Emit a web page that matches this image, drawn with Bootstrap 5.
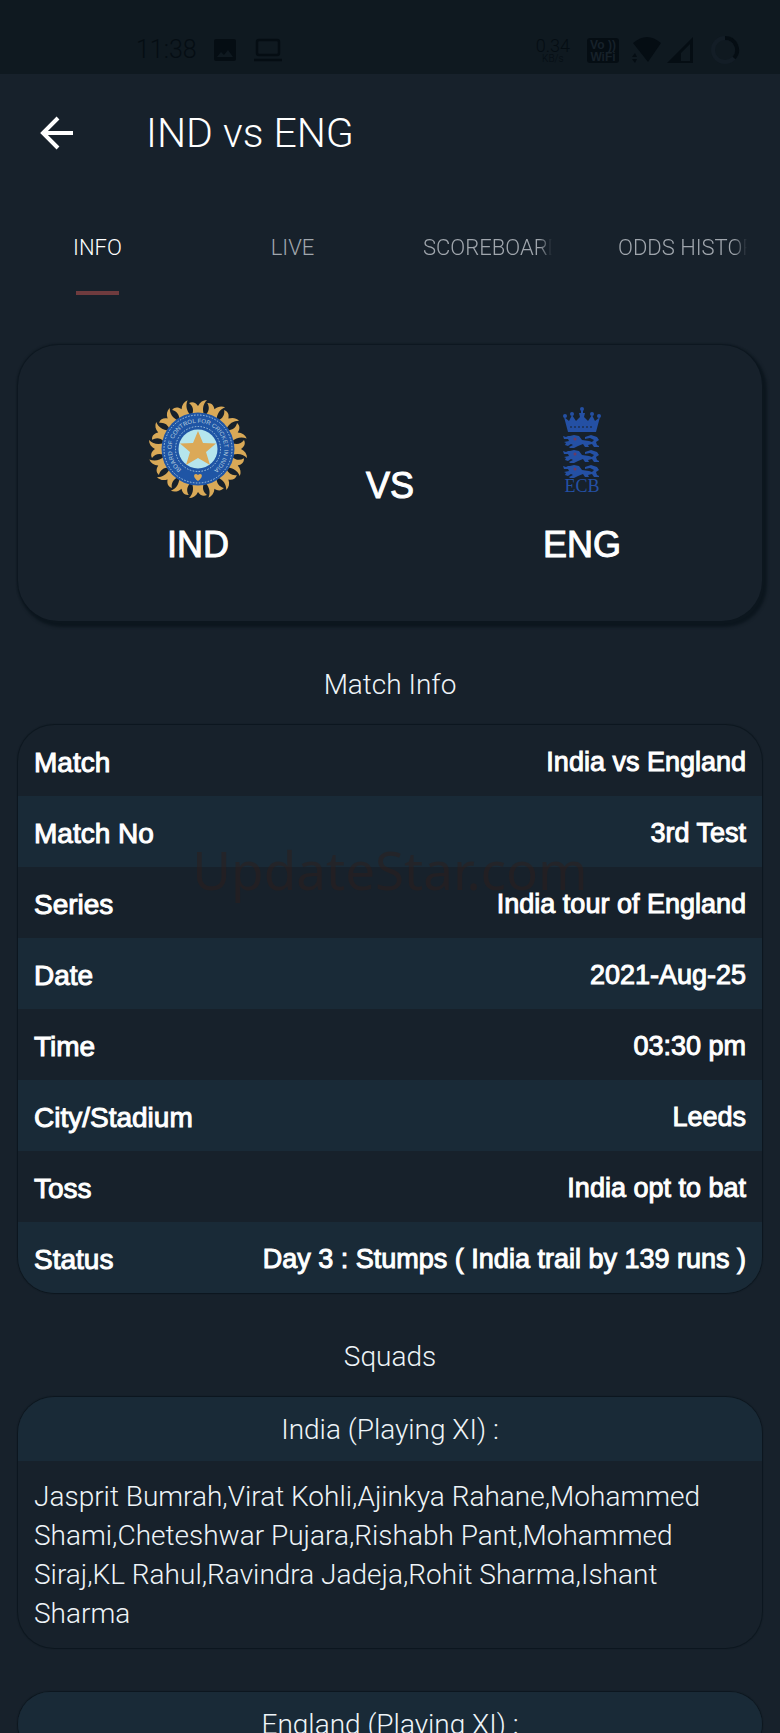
<!DOCTYPE html>
<html lang="en">
<head>
<meta charset="utf-8">
<meta name="viewport" content="width=device-width, initial-scale=1">
<title>IND vs ENG</title>
<link href="https://cdn.jsdelivr.net/npm/bootstrap@5.3.0/dist/css/bootstrap.min.css" rel="stylesheet">
<style>
  :root { --bg: #17212b; --stripe: #192a37; --edge: #0c161e; }
  body { background: var(--bg); color: #eef4f8; font-family: Roboto, "Liberation Sans", sans-serif; font-weight: 300; font-size: 28px; line-height: 39px; height: 100vh; overflow: hidden; }
  .status-bar { background: #0f1920; height: 74px; color: #050d13; padding: 26px 40px 0 136px; line-height: 48px; }
  .clock { font-size: 25px; }
  .rate { font-size: 18px; line-height: 18px; }
  .rate small { font-size: 10px; line-height: 8px; }
  .app-bar { height: 118px; padding: 0 40px; gap: 72px; }
  .app-bar h1 { font-size: 41px; line-height: 48px; font-weight: 300; color: #fff; }
  .back { width: 34px; height: 34px; line-height: 0; color: #fff; }
  .tabs { height: 110px; }
  .tabs .nav-link { color: #a0a6ad; font-size: 22px; line-height: 28px; padding: 42px 33px 0; height: 110px; overflow: hidden; }
  .tabs .nav-link.active { color: #fff; }
  .tabs .nav-link.active::after { content: ""; display: block; width: 43px; height: 4px; margin: 29px auto 0; background: #6f3b3e; }
  .fade-end { overflow: hidden; white-space: nowrap; -webkit-mask-image: linear-gradient(90deg, #000 90%, transparent); mask-image: linear-gradient(90deg, #000 90%, transparent); }
  main { padding: 43px 18px 0; }
  .versus { height: 276px; border-radius: 40px; padding: 52px 84px 0; box-shadow: 3px 4px 3px 2px var(--edge), 0 0 2px 1px var(--edge); background: var(--bg); }
  .strong-text { font-family: "Liberation Sans", sans-serif; font-weight: 400; color: #fff; -webkit-text-stroke: 1px #fff; }
  .team { font-size: 36px; line-height: 44px; }
  .team-side { gap: 22px; }
  .crest text { -webkit-text-stroke: 0; }
  .section-title { font-size: 28px; line-height: 40px; font-weight: 300; margin: 0; padding: 44px 0 20px; }
  .panel { border-radius: 36px; box-shadow: 0 0 1px 1px var(--edge); overflow: hidden; }
  .facts { --bs-table-bg: transparent; --bs-table-color: #fff; font-size: 28px; line-height: 35px; color: #fff; }
  .facts th, .facts td { height: 71px; padding: 4px 16px 0; border: 0; vertical-align: middle; font-weight: 400; }
  .facts td { font-size: 27px; }
  .facts tr:nth-child(even) > * { background: var(--stripe); }
  .squad-head { background: var(--stripe); font-size: 28px; line-height: 40px; padding: 13px 16px 11px; font-weight: 300; }
  .squad-body { padding: 16px 16px 15px; }
  .squad-next { margin-top: 44px; }
  .watermark { top: 105px; left: 0; right: 0; font-family: "Noto Sans", sans-serif; font-weight: 400; font-size: 53px; line-height: 80px; color: #2d1f1c; opacity: .5; pointer-events: none; }
</style>
</head>
<body>
<div class="status-bar d-flex align-items-start">
  <span class="clock">11:38</span>
  <div class="d-flex align-items-center gap-3 ms-3 h-100">
    <svg width="24" height="24" viewBox="0 0 24 24"><path fill="currentColor" fill-rule="evenodd" d="M3 1h18a2 2 0 0 1 2 2v18a2 2 0 0 1-2 2H3a2 2 0 0 1-2-2V3a2 2 0 0 1 2-2zM4 19h16l-5-7-4 5-3-3z"/></svg>
    <svg width="30" height="24" viewBox="0 0 30 24" fill="none" stroke="currentColor" stroke-width="2.5"><rect x="4" y="2" width="22" height="15" rx="2"/><path d="M1 22h28"/></svg>
  </div>
  <div class="d-flex align-items-center ms-auto h-100">
    <span class="rate d-flex flex-column text-center me-3">0.34 <small>KB/s</small></span>
    <svg class="me-2" width="34" height="27" viewBox="0 0 34 27"><rect x="1" y="1" width="32" height="25" rx="3" fill="currentColor"/><g fill="#17212a" font-family="Liberation Sans, sans-serif" font-weight="700" font-size="12" text-anchor="middle"><text x="17" y="12">Vo ))</text><text x="17" y="24">WiFi</text></g></svg>
    <svg class="ms-1 me-3" width="62" height="28" viewBox="0 0 62 28"><path fill="currentColor" d="M1 7Q15-5 29 7L16 26zM0 21l3-4 2 4zM0 23h5l-2 4z"/><path fill="currentColor" fill-rule="evenodd" d="M35 27L61 1v26zM49 25h9V8l-9 9z"/></svg>
    <svg width="30" height="30" viewBox="0 0 30 30" fill="none" stroke-width="4"><circle cx="15" cy="15" r="12" stroke="#131d26"/><path stroke="currentColor" d="M15 3a12 12 0 0 1 9 20"/></svg>
  </div>
</div>

<header class="app-bar d-flex align-items-center">
  <button type="button" class="back btn p-0 border-0" aria-label="Back">
    <svg width="34" height="34" viewBox="0 0 34 34" fill="none" stroke="currentColor" stroke-width="4"><path d="M33 17H4M18 2L3 17l15 15"/></svg>
  </button>
  <h1 class="m-0">IND vs ENG</h1>
</header>

<nav class="tabs nav nav-fill flex-nowrap row g-0">
  <a class="nav-link active col-3 text-center" href="#info" aria-current="page">INFO</a>
  <a class="nav-link col-3 text-center" href="#live">LIVE</a>
  <a class="nav-link col-3 text-start" href="#scoreboard"><div class="fade-end">SCOREBOARD</div></a>
  <a class="nav-link col-3 text-start" href="#odds"><div class="fade-end">ODDS HISTORY</div></a>
</nav>

<main id="info">
  <section class="versus">
    <div class="row g-0 text-center strong-text team align-items-center">
      <div class="col-4 team-side d-flex flex-column align-items-center">
        <svg class="crest" width="100" height="104" viewBox="-50 -52 100 104" role="img" aria-label="India crest">
          <defs>
            <path id="petal" d="M-6-34C-4-39-5-43-9-46C-5-48-2-46 0-43C2-47 5-49 9-49C5-45 4-40 6-34z"/>
            <path id="motto" d="M-16.500 20.500A26.300 26.300 0 1 1 16.500 20.500"/>
          </defs>
          <g id="petals" fill="#d9a957"></g>
          <circle r="36.500" fill="#1f55a5"/>
          <circle r="34" fill="none" stroke="#a8c8df" stroke-dasharray="1.500 1.500"/>
          <circle r="22.500" fill="none" stroke="#a8c8df" stroke-dasharray="1.500 1.500"/>
          <circle r="19.500" fill="#b5e5ed"/>
          <path fill="#dba958" d="M0-18L5-6L18-5.500L8 3L12 16L0 9L-12 16L-8 3L-18-5.500L-5-6z"/>
          <path fill="#dba958" d="M0 32C-7 27-3 23 0 26C3 23 7 27 0 32z"/>
          <text font-size="6" fill="#b7cfdf" font-family="Liberation Sans, sans-serif"><textPath href="#motto">BOARD OF CONTROL FOR CRICKET IN INDIA</textPath></text>
        </svg>
        <span>IND</span>
      </div>
      <div class="col-4 pt-2">VS</div>
      <div class="col-4 team-side d-flex flex-column align-items-center">
        <svg class="crest" width="40" height="104" viewBox="0 0 40 104" role="img" aria-label="England crest" fill="#2450a4">
          <path d="M6 35L2 20l5 4 3-6 4 6 4-4-1-4h2v-4h2v4h2l-1 4 4 4 4-6 3 6 5-4-4 15z"/>
          <path d="M8 30h24" stroke="#18212b" stroke-dasharray="2 2"/>
          <circle cx="3" cy="19" r="2"/><circle cx="37" cy="19" r="2"/><circle cx="10" cy="17" r="2"/><circle cx="30" cy="17" r="2"/><circle cx="20" cy="12" r="2"/>
          <defs><g id="lion">
            <path d="M8 1l4-1 5 1 3 4 7 1 3 1 2-2-4-2-5 1 0-2 6-2 6 2 2 3-3 2 1 3 2 1v1h-5l-2-3-4 1 1 2h-4l-2-3-5 2-4 2H8l-1-1 4-2-2-1-3 2-3-1 1-2-2-1 5-1-1-2-4 0-1-3 3 1 2-1z"/>
            <circle cx="13" cy="4" r="1.500" fill="#6b3b62"/>
          </g></defs>
          <use href="#lion" y="38"/><use href="#lion" y="53"/><use href="#lion" y="68"/>
          <text x="20" y="95" text-anchor="middle" font-family="Liberation Serif, serif" font-size="18">ECB</text>
        </svg>
        <span>ENG</span>
      </div>
    </div>
  </section>

  <h2 class="section-title text-center">Match Info</h2>
  <div class="position-relative">
    <section class="panel">
      <table class="table facts strong-text m-0">
        <tbody>
          <tr><th scope="row">Match</th><td class="text-end">India vs England</td></tr>
          <tr><th scope="row">Match No</th><td class="text-end">3rd Test</td></tr>
          <tr><th scope="row">Series</th><td class="text-end">India tour of England</td></tr>
          <tr><th scope="row">Date</th><td class="text-end">2021-Aug-25</td></tr>
          <tr><th scope="row">Time</th><td class="text-end">03:30 pm</td></tr>
          <tr><th scope="row">City/Stadium</th><td class="text-end">Leeds</td></tr>
          <tr><th scope="row">Toss</th><td class="text-end">India opt to bat</td></tr>
          <tr><th scope="row">Status</th><td class="text-end">Day 3 : Stumps ( India trail by 139 runs )</td></tr>
        </tbody>
      </table>
    </section>
    <div class="watermark position-absolute text-center">UpdateStar.com</div>
  </div>

  <h2 class="section-title text-center">Squads</h2>
  <section class="panel">
    <h3 class="squad-head text-center m-0">India (Playing XI) :</h3>
    <p class="squad-body m-0">Jasprit Bumrah,Virat Kohli,Ajinkya Rahane,Mohammed Shami,Cheteshwar Pujara,Rishabh Pant,Mohammed Siraj,KL Rahul,Ravindra Jadeja,Rohit Sharma,Ishant Sharma</p>
  </section>
  <section class="panel squad-next">
    <h3 class="squad-head text-center m-0">England (Playing XI) :</h3>
  </section>
</main>
<script src="https://cdn.jsdelivr.net/npm/bootstrap@5.3.0/dist/js/bootstrap.bundle.min.js"></script>
<script>
  // Repeat the flame shape around the crest
  document.getElementById('petals').innerHTML = Array.from({ length: 16 }, (_, i) =>
    `<use href="#petal" transform="rotate(${i * 22.5})"/>`).join('');
</script>
</body>
</html>
